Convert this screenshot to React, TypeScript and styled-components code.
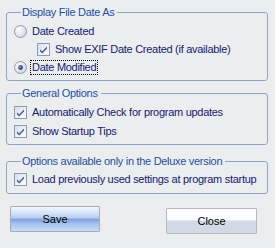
import React from "react";
import styled, { createGlobalStyle } from "styled-components";

const Global = createGlobalStyle`
  html, body { margin: 0; padding: 0; }
  body {
    background: #ecedee;
    font-family: "Liberation Sans", Arial, sans-serif;
    font-size: 11px;
    width: 275px;
    height: 248px;
    overflow: hidden;
  }
`;

const Page = styled.div`
  display: flex;
  flex-direction: column;
  padding: 0 7px 0 6px;
`;

const Group = styled.fieldset<{ $mt: number; $pt: number; $pb: number; $gap: number }>`
  margin: ${(p) => p.$mt}px 0 0 0;
  padding: ${(p) => p.$pt}px 4px ${(p) => p.$pb}px 7px;
  border: 1px solid #8ea6c6;
  border-radius: 3px;
  display: flex;
  flex-direction: column;
  gap: ${(p) => p.$gap}px;
  min-width: 0;
`;

const Legend = styled.legend`
  margin-left: 7px;
  padding: 0 3px 0 1px;
  color: #1f4f9f;
  line-height: 13px;
  font-size: 11px;
  letter-spacing: -0.3px;
`;

const Row = styled.label<{ $indent?: number }>`
  display: flex;
  align-items: center;
  height: 18px;
  padding-left: ${(p) => p.$indent ?? 0}px;
  color: #13206e;
  white-space: nowrap;
  gap: 3px;
  letter-spacing: -0.28px;
`;

const Text = styled.span<{ $focus?: boolean }>`
  line-height: 13px;
  padding: 0 1px;
  border: 1px dotted ${(p) => (p.$focus ? "#000" : "transparent")};
`;

const BoxWrap = styled.span`
  width: 13px;
  height: 13px;
  flex: none;
  display: inline-flex;
`;

const Radio = ({ on }: { on?: boolean }) => (
  <BoxWrap>
    <svg width="13" height="13" viewBox="0 0 13 13">
      <defs>
        <radialGradient id={on ? "rg1" : "rg0"} cx="0.35" cy="0.35" r="0.7">
          <stop offset="0" stopColor="#ffffff" />
          <stop offset="1" stopColor="#cfd6e2" />
        </radialGradient>
        <radialGradient id="dot" cx="0.4" cy="0.4" r="0.6">
          <stop offset="0" stopColor="#8aa0c8" />
          <stop offset="1" stopColor="#1e2a4a" />
        </radialGradient>
      </defs>
      <circle cx="6.5" cy="6.5" r="6" fill={`url(#${on ? "rg1" : "rg0"})`} stroke="#8d9db6" strokeWidth="1" />
      {on && <circle cx="6.5" cy="6.5" r="2.4" fill="url(#dot)" />}
    </svg>
  </BoxWrap>
);

const Check = () => (
  <BoxWrap>
    <svg width="13" height="13" viewBox="0 0 13 13">
      <defs>
        <linearGradient id="cg" x1="0" y1="0" x2="1" y2="1">
          <stop offset="0" stopColor="#d6dce8" />
          <stop offset="1" stopColor="#ffffff" />
        </linearGradient>
      </defs>
      <rect x="0.5" y="0.5" width="12" height="12" fill="url(#cg)" stroke="#8a9cba" />
      <path d="M3 6.2 L5.2 8.4 L10 3.6 L10 5.6 L5.2 10.4 L3 8.2 Z" fill="#3d5a9a" />
    </svg>
  </BoxWrap>
);

const ButtonRow = styled.div`
  display: flex;
  justify-content: space-between;
  align-items: flex-start;
  padding: 12px 11px 0 4px;
`;

const Button = styled.button<{ $primary?: boolean; $mt?: number }>`
  width: ${(p) => (p.$primary ? 90 : 91)}px;
  height: 26px;
  margin-top: ${(p) => p.$mt ?? 0}px;
  border: 1px solid ${(p) => (p.$primary ? "#a8acb6" : "#b4b8c0")};
  border-radius: 1px;
  font-family: "Liberation Sans", Arial, sans-serif;
  font-size: 11px;
  font-weight: 400;
  color: #000;
  padding: 0;
  background: ${(p) =>
    p.$primary
      ? "linear-gradient(to bottom, #f2f6fd 0%, #d6e3f8 25%, #b7cdf0 45%, #7fa4e2 52%, #a6c2ef 70%, #cadcf7 100%)"
      : "linear-gradient(to bottom, #ffffff 0%, #fafbfd 45%, #d3d9e6 50%, #d3d9e6 100%)"};
`;

export default function App() {
  return (
    <>
      <Global />
      <Page>
        <Group $mt={6} $pt={3} $pb={4} $gap={0}>
          <Legend>Display File Date As</Legend>
          <Row>
            <Radio />
            <Text>Date Created</Text>
          </Row>
          <Row $indent={23}>
            <Check />
            <Text>Show EXIF Date Created (if available)</Text>
          </Row>
          <Row>
            <Radio on />
            <Text $focus>Date Modified</Text>
          </Row>
        </Group>
        <Group $mt={6} $pt={3} $pb={4} $gap={1}>
          <Legend>General Options</Legend>
          <Row>
            <Check />
            <Text>Automatically Check for program updates</Text>
          </Row>
          <Row>
            <Check />
            <Text>Show Startup Tips</Text>
          </Row>
        </Group>
        <Group $mt={10} $pt={2} $pb={5} $gap={0}>
          <Legend>Options available only in the Deluxe version</Legend>
          <Row>
            <Check />
            <Text>Load previously used settings at program startup</Text>
          </Row>
        </Group>
        <ButtonRow>
          <Button $primary>Save</Button>
          <Button $mt={2}>Close</Button>
        </ButtonRow>
      </Page>
    </>
  );
}
